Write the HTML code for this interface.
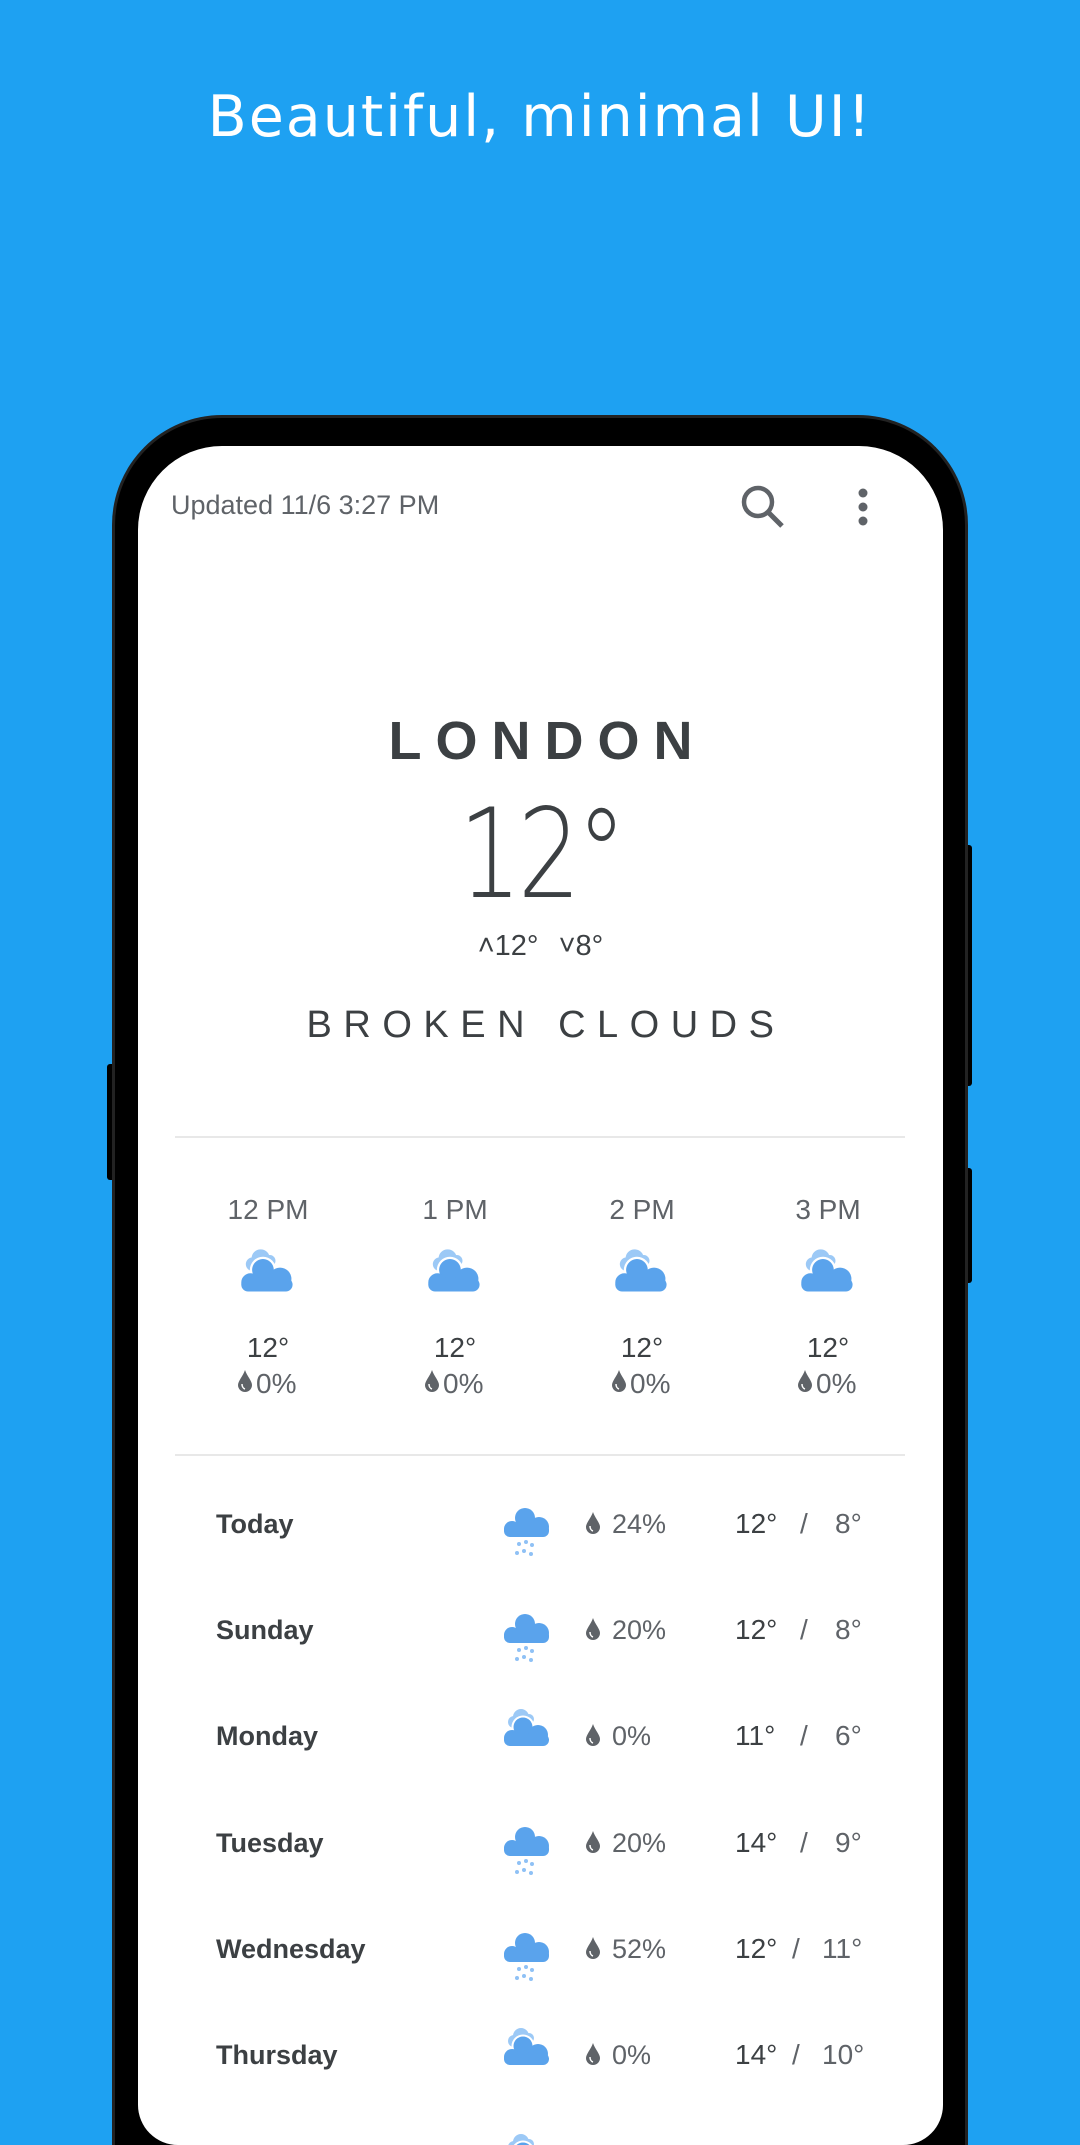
<!DOCTYPE html>
<html><head><meta charset="utf-8"><style>
*{margin:0;padding:0;box-sizing:border-box}
html,body{width:1080px;height:2145px;overflow:hidden}
body{background:#1ea1f2;font-family:"Liberation Sans",sans-serif}
#wrap{position:relative;width:1080px;height:2145px;overflow:hidden}
.a{position:absolute}
.title{left:0;width:1080px;top:84px;text-align:center;color:#fff;font-size:57px;letter-spacing:2px;font-family:"DejaVu Sans","Liberation Sans",sans-serif}
.phone{left:112px;top:415px;width:856px;height:1730px;background:#000;border-radius:110px 110px 0 0;border:3px solid #222;border-bottom:none}
.screen{left:138px;top:446px;width:805px;height:1699px;background:#fff;border-radius:84px 84px 40px 40px;overflow:hidden}
.btn{background:#000}
.c{text-align:center}
.day{font-weight:bold;color:#3c4043;font-size:27px;left:78px}
.pct{color:#5f6368;font-size:27px}
.hi{color:#3c4043;font-size:28px}
</style></head><body><div id="wrap">
<div class="a title">Beautiful, minimal UI!</div>
<div class="a btn" style="left:107px;top:1064px;width:10px;height:116px;border-radius:3px"></div>
<div class="a btn" style="left:962px;top:845px;width:10px;height:241px;border-radius:3px"></div>
<div class="a btn" style="left:962px;top:1168px;width:10px;height:115px;border-radius:3px"></div>
<div class="a phone"></div>
<div class="a screen">
<svg width="0" height="0" style="position:absolute"><defs>
<g id="sc"><circle cx="19" cy="9" r="8" fill="#9cc9f6"/><circle cx="12" cy="14" r="6" fill="#9cc9f6"/><circle cx="27" cy="11" r="5" fill="#9cc9f6"/><circle cx="21" cy="19" r="11.5" fill="#fff"/><circle cx="21" cy="19" r="9.5" fill="#5aa3ec"/><circle cx="36" cy="27" r="10" fill="#5aa3ec"/><circle cx="10" cy="30" r="8" fill="#5aa3ec"/><rect x="2" y="26" width="45" height="12" rx="6" fill="#5aa3ec"/></g>
<g id="rc"><circle cx="23" cy="12" r="10" fill="#5aa3ec"/><circle cx="37" cy="21" r="10" fill="#5aa3ec"/><circle cx="10" cy="23" r="8" fill="#5aa3ec"/><rect x="2" y="18" width="45" height="13" rx="6" fill="#5aa3ec"/><g fill="#8fc1f5"><circle cx="17" cy="38" r="2"/><circle cx="24" cy="36" r="2"/><circle cx="30" cy="39" r="2"/><circle cx="15" cy="47" r="2"/><circle cx="22" cy="45" r="2"/><circle cx="29" cy="48" r="2"/></g></g>
<g id="dr"><path d="M7 0 C5 6 0 11 0 15 A7 7 0 0 0 14 15 C14 11 9 6 7 0Z" fill="#5f6368"/><path d="M4 14 A4 5 0 0 0 7 19" stroke="#fff" stroke-width="1.5" fill="none"/></g>
</defs></svg>
<div class="a" style="left:33px;top:44px;font-size:27px;color:#5f6368">Updated 11/6 3:27 PM</div>
<svg class="a" style="left:600px;top:30px" width="60" height="60"><circle cx="20" cy="26" r="14" stroke="#5f6368" stroke-width="4.5" fill="none"/><line x1="30" y1="36" x2="44" y2="50" stroke="#5f6368" stroke-width="5"/></svg>
<svg class="a" style="left:715px;top:40px" width="20" height="45"><circle cx="10" cy="7" r="4.5" fill="#5f6368"/><circle cx="10" cy="21" r="4.5" fill="#5f6368"/><circle cx="10" cy="35" r="4.5" fill="#5f6368"/></svg>
<div class="a c" style="left:0;width:805px;top:264px;font-size:54px;font-weight:bold;letter-spacing:14px;padding-left:14px;color:#3c4043">LONDON</div>
<div class="a c" style="left:0;width:805px;top:337px;font-size:124px;font-weight:300;color:#3c4043;font-family:'DejaVu Sans','Liberation Sans',sans-serif;transform:scaleX(0.8);letter-spacing:-5px">12°</div>
<div class="a c" style="left:0;width:805px;top:484px;font-size:29px;color:#3c4043;word-spacing:12px">˄12° ˅8°</div>
<div class="a c" style="left:0;width:805px;top:558px;font-size:38px;color:#3c4043;letter-spacing:11.5px;padding-left:11px">BROKEN CLOUDS</div>
<div class="a" style="left:37px;top:690px;width:730px;height:2px;background:#e8e8e8"></div>
<div class="a" style="left:37px;top:1008px;width:730px;height:2px;background:#e8e8e8"></div>

<div class="a c" style="left:50px;width:160px;top:748px;font-size:28px;color:#5f6368">12 PM</div>
<div class="a c" style="left:237px;width:160px;top:748px;font-size:28px;color:#5f6368">1 PM</div>
<div class="a c" style="left:424px;width:160px;top:748px;font-size:28px;color:#5f6368">2 PM</div>
<div class="a c" style="left:610px;width:160px;top:748px;font-size:28px;color:#5f6368">3 PM</div>
<svg class="a" style="left:101px;top:802px" width="57" height="46" viewBox="0 0 50 40"><use href="#sc"/></svg>
<svg class="a" style="left:288px;top:802px" width="57" height="46" viewBox="0 0 50 40"><use href="#sc"/></svg>
<svg class="a" style="left:475px;top:802px" width="57" height="46" viewBox="0 0 50 40"><use href="#sc"/></svg>
<svg class="a" style="left:661px;top:802px" width="57" height="46" viewBox="0 0 50 40"><use href="#sc"/></svg>
<div class="a c" style="left:50px;width:160px;top:886px;font-size:28px;color:#3c4043">12°</div>
<div class="a c" style="left:237px;width:160px;top:886px;font-size:28px;color:#3c4043">12°</div>
<div class="a c" style="left:424px;width:160px;top:886px;font-size:28px;color:#3c4043">12°</div>
<div class="a c" style="left:610px;width:160px;top:886px;font-size:28px;color:#3c4043">12°</div>
<svg class="a" style="left:100px;top:924px" width="16" height="24"><use href="#dr"/></svg><div class="a pct" style="left:118px;top:922px;font-size:28px">0%</div>
<svg class="a" style="left:287px;top:924px" width="16" height="24"><use href="#dr"/></svg><div class="a pct" style="left:305px;top:922px;font-size:28px">0%</div>
<svg class="a" style="left:474px;top:924px" width="16" height="24"><use href="#dr"/></svg><div class="a pct" style="left:492px;top:922px;font-size:28px">0%</div>
<svg class="a" style="left:660px;top:924px" width="16" height="24"><use href="#dr"/></svg><div class="a pct" style="left:678px;top:922px;font-size:28px">0%</div>

<div class="a day" style="top:1063px">Today</div>
<svg class="a" style="left:364px;top:1060px" width="50" height="52"><use href="#rc"/></svg>
<svg class="a" style="left:448px;top:1066px" width="16" height="24"><use href="#dr"/></svg><div class="a pct" style="left:474px;top:1063px">24%</div>
<div class="a hi" style="left:597px;top:1062px">12°</div><div class="a pct" style="left:662px;top:1062px;font-size:28px">/</div><div class="a pct" style="left:697px;top:1062px;font-size:28px">8°</div>

<div class="a day" style="top:1169px">Sunday</div>
<svg class="a" style="left:364px;top:1166px" width="50" height="52"><use href="#rc"/></svg>
<svg class="a" style="left:448px;top:1172px" width="16" height="24"><use href="#dr"/></svg><div class="a pct" style="left:474px;top:1169px">20%</div>
<div class="a hi" style="left:597px;top:1168px">12°</div><div class="a pct" style="left:662px;top:1168px;font-size:28px">/</div><div class="a pct" style="left:697px;top:1168px;font-size:28px">8°</div>

<div class="a day" style="top:1275px">Monday</div>
<svg class="a" style="left:364px;top:1262px" width="50" height="40"><use href="#sc"/></svg>
<svg class="a" style="left:448px;top:1278px" width="16" height="24"><use href="#dr"/></svg><div class="a pct" style="left:474px;top:1275px">0%</div>
<div class="a hi" style="left:597px;top:1274px">11°</div><div class="a pct" style="left:662px;top:1274px;font-size:28px">/</div><div class="a pct" style="left:697px;top:1274px;font-size:28px">6°</div>

<div class="a day" style="top:1382px">Tuesday</div>
<svg class="a" style="left:364px;top:1379px" width="50" height="52"><use href="#rc"/></svg>
<svg class="a" style="left:448px;top:1385px" width="16" height="24"><use href="#dr"/></svg><div class="a pct" style="left:474px;top:1382px">20%</div>
<div class="a hi" style="left:597px;top:1381px">14°</div><div class="a pct" style="left:662px;top:1381px;font-size:28px">/</div><div class="a pct" style="left:697px;top:1381px;font-size:28px">9°</div>

<div class="a day" style="top:1488px">Wednesday</div>
<svg class="a" style="left:364px;top:1485px" width="50" height="52"><use href="#rc"/></svg>
<svg class="a" style="left:448px;top:1491px" width="16" height="24"><use href="#dr"/></svg><div class="a pct" style="left:474px;top:1488px">52%</div>
<div class="a hi" style="left:597px;top:1487px">12°</div><div class="a pct" style="left:654px;top:1487px;font-size:28px">/</div><div class="a pct" style="left:684px;top:1487px;font-size:28px">11°</div>

<div class="a day" style="top:1594px">Thursday</div>
<svg class="a" style="left:364px;top:1581px" width="50" height="40"><use href="#sc"/></svg>
<svg class="a" style="left:448px;top:1597px" width="16" height="24"><use href="#dr"/></svg><div class="a pct" style="left:474px;top:1594px">0%</div>
<div class="a hi" style="left:597px;top:1593px">14°</div><div class="a pct" style="left:654px;top:1593px;font-size:28px">/</div><div class="a pct" style="left:684px;top:1593px;font-size:28px">10°</div>

<svg class="a" style="left:364px;top:1687px" width="50" height="40"><use href="#sc"/></svg>
</div>
</div></body></html>
